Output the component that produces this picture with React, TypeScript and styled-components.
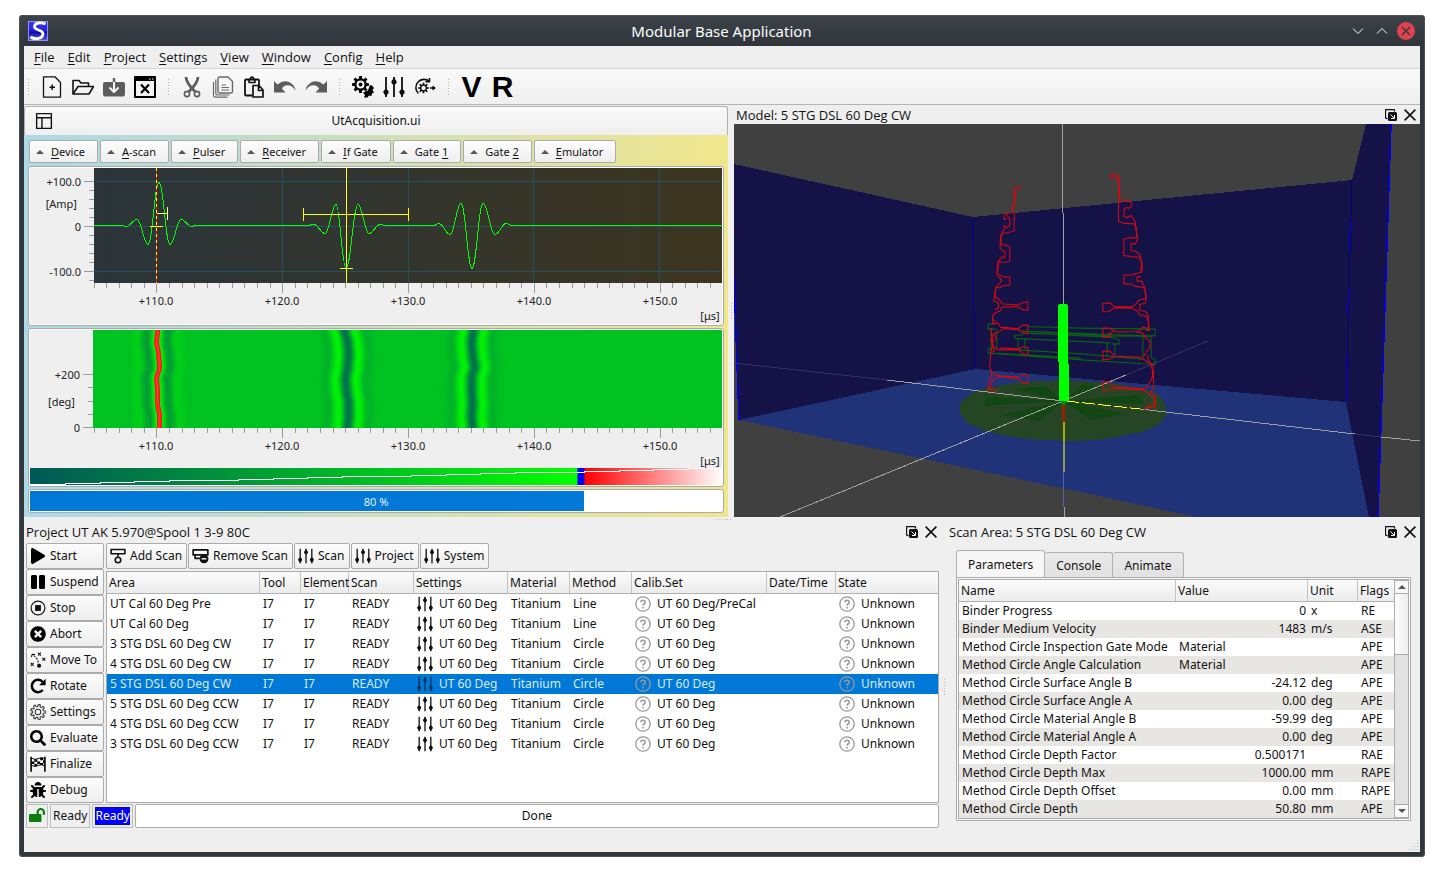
import React from "react";
import styled, { createGlobalStyle, css } from "styled-components";
import { FaBug, FaLockOpen, FaPause, FaPlay, FaSearch, FaTimesCircle } from "react-icons/fa";

const Global = createGlobalStyle`
  *, *::before, *::after { box-sizing: border-box; }
  body { margin: 0; background: #fff; color: #111; font: 12px/18px "Noto Sans", "Open Sans", sans-serif; }
  button, input, table { font: inherit; color: inherit; }
  svg { display: block; flex: none; }
  u { text-underline-offset: 2px; }
`;

/* ---------- window frame ---------- */

const Page = styled.div`
  display: flex;
  min-height: 100vh;
  padding: 15px 19px 23px;
`;

const AppWindow = styled.div`
  flex: 1;
  min-width: 0;
  display: flex;
  flex-direction: column;
  padding: 0 5px 5px;
  background: #31373c;
  border-radius: 4px;
  box-shadow: inset 0 0 0 1px #4b5358;
`;

const TitleBar = styled.header`
  height: 30px;
  margin: 1px -4px 0;
  padding: 0 9px 0 8px;
  display: grid;
  grid-template-columns: 1fr auto 1fr;
  align-items: center;
  background: linear-gradient(#3c4349, #2f353a);
  border-radius: 3px 3px 0 0;
  color: #fcfcfc;
`;

const WindowTitle = styled.h1`
  margin: 0;
  font: 400 15px/20px "Noto Sans", sans-serif;
`;

const WindowButtons = styled.div`
  display: flex;
  justify-content: flex-end;
  gap: 6px;
`;

const PlainButton = styled.button`
  display: flex;
  align-items: center;
  justify-content: center;
  padding: 0;
  border: 0;
  background: none;
`;

const Client = styled.main`
  flex: 1;
  display: flex;
  flex-direction: column;
  background: #efefef;
`;

const MenuBar = styled.nav`
  display: flex;
  height: 23px;
  padding: 0 3px;
  border-bottom: 1px solid #d4d4d4;
  font: 13px/18px "Open Sans", sans-serif;
`;

const MenuItem = styled.button`
  padding: 0 7px 0 6px;
  border: 0;
  background: none;
  &:first-child { padding-left: 7px; }
`;

const ToolBar = styled.div`
  display: flex;
  align-items: center;
  height: 36px;
  border-bottom: 1px solid #b4b4b4;
  background: linear-gradient(#fafafa, #efefef);
`;

const ToolHandle = styled.span`
  width: 4px;
  height: 17px;
  margin: 0 5px 0 7px;
  background: radial-gradient(circle, #b0b0b0 32%, transparent 36%) 0 0 / 3px 3px;
  &:first-child { margin-left: 3px; }
`;

const ToolButton = styled(PlainButton)`
  width: 31px;
  height: 30px;
`;

const Letter = styled.span`
  font: bold 30px/30px "Liberation Sans", Arial, sans-serif;
  color: #000;
`;

/* ---------- docks ---------- */

const Docks = styled.div`
  display: flex;
`;

const LeftDock = styled.section`
  flex: 704 1 0;
  min-width: 0;
`;

const VSplitter = styled.div`
  flex: none;
  width: 6px;
  display: flex;
  align-items: center;
  justify-content: center;
  &::after {
    content: "";
    width: 1px;
    height: 16px;
    background: repeating-linear-gradient(#b4b4b4 0 1px, transparent 1px 3px);
  }
`;

const HSplitter = styled.div`
  height: 5px;
  padding: 2px 0 0 691px;
  &::after {
    content: "";
    display: block;
    width: 17px;
    height: 1px;
    background: repeating-linear-gradient(90deg, #b4b4b4 0 1px, transparent 1px 3px);
  }
`;

const RightDock = styled.section`
  flex: 686 1 0;
  min-width: 0;
`;

const DockTitle = styled.header`
  display: flex;
  align-items: center;
  justify-content: space-between;
  height: 19px;
  padding: 0 4px 0 2px;
`;

const DockName = styled.h2`
  margin: 0;
  font: 400 13px/18px "Open Sans", sans-serif;
`;

const DockButtons = styled.div`
  display: flex;
  gap: 7px;
`;

const UiHeader = styled.div`
  display: grid;
  grid-template-columns: 1fr auto 1fr;
  align-items: center;
  height: 29px;
  margin-top: 1px;
  padding: 0 10px;
  border: 1px solid #b0b0b0;
  border-bottom: 0;
  border-radius: 3px 3px 0 0;
  background: linear-gradient(#fafafa, #efefef);
`;

const UiBody = styled.div`
  display: flex;
  flex-direction: column;
  gap: 2px;
  padding: 5px 4px 4px;
  background: linear-gradient(90deg, #add8e6, #f0e68c);
`;

const GateBar = styled.div`
  display: flex;
  gap: 2px;
  margin-bottom: 1px;
  padding-left: 1px;
  font: 11px/18px "Noto Sans", sans-serif;
`;

const GateButton = styled.button`
  display: flex;
  align-items: center;
  gap: 7px;
  height: 23px;
  padding: 0 12px 0 6px;
  border: 1px solid #ababab;
  border-radius: 2px;
  background: linear-gradient(#fdfdfd, #eeeeee);
`;

const Frame = styled.div`
  padding: 1px;
  border: 1px solid #ababab;
  border-radius: 3px;
  background: #fff;
`;

const Chart = styled.svg`
  width: 100%;
  height: auto;
  background: #efefef;
  font-family: "Noto Sans", sans-serif;
`;

const Scene = styled.svg`
  width: 100%;
  height: auto;
  background: #404040;
`;

const Progress = styled.div`
  position: relative;
  height: 20px;
  background: #fff;
`;

const ProgressFill = styled.div<{ $percent: number }>`
  width: ${(p) => p.$percent}%;
  height: 100%;
  background: #0078d7;
`;

const ProgressLabel = styled.span`
  position: absolute;
  inset: 0;
  text-align: center;
  font: 11px/21px "Noto Sans", sans-serif;
  color: #e4f1fb;
`;

/* ---------- project dock ---------- */

const LowerDocks = styled.div`
  flex: 1;
  display: flex;
`;

const ProjectDock = styled.section`
  flex: 917 1 0;
  min-width: 0;
`;

const ScanDock = styled.section`
  flex: 473 1 0;
  min-width: 0;
  display: flex;
  flex-direction: column;
  padding-bottom: 1px;
`;

const ProjectGrid = styled.div`
  display: grid;
  grid-template-columns: 78px minmax(0, 1fr);
  column-gap: 2px;
  padding: 2px 2px 0 2px;
`;

const SideButtons = styled.div`
  display: flex;
  flex-direction: column;
`;

const raised = css`
  border: 1px solid #ababab;
  border-radius: 2px;
  background: linear-gradient(#fcfcfc, #eeeeee);
`;

const SideButton = styled.button`
  ${raised}
  display: flex;
  align-items: center;
  gap: 4px;
  height: 26px;
  padding: 0 3px;
  white-space: nowrap;
`;

const ScanBar = styled.div`
  display: flex;
  gap: 1px;
  margin-bottom: 2px;
`;

const ScanButton = styled.button`
  ${raised}
  display: flex;
  align-items: center;
  gap: 4px;
  height: 26px;
  padding: 0 4px 0 3px;
  white-space: nowrap;
`;

const ProjectMain = styled.div`
  display: flex;
  flex-direction: column;
`;

const TableBox = styled.div`
  flex: 1;
  border: 1px solid #ababab;
  background: #fff;
`;

const headCell = css`
  padding: 0 0 0 2px;
  border-right: 1px solid #c4c4c4;
  border-bottom: 1px solid #b0b0b0;
  background: linear-gradient(#fbfbfb, #ececec);
  text-align: left;
  font-weight: 400;
  white-space: nowrap;
  &:last-child { border-right: 0; }
`;

const ScanTable = styled.table`
  width: 100%;
  table-layout: fixed;
  border-collapse: separate;
  border-spacing: 0;
  th { ${headCell} height: 22px; }
  td { height: 20px; padding: 0 3px; white-space: nowrap; }
`;

const ScanRow = styled.tr<{ $selected: boolean }>`
  ${(p) => p.$selected && css`background: #0078d7; color: #d8ecfb;`}
`;

const IconCell = styled.span`
  display: flex;
  align-items: center;
  gap: 6px;
`;

const StatusRow = styled.div`
  display: flex;
  gap: 2px;
  height: 24px;
  margin: 1px 2px 0;
`;

const StatusBox = styled.div`
  border: 1px solid #bcbcbc;
  padding: 2px;
`;

const ReadyMark = styled.span`
  display: block;
  background: #00f;
  color: #fff;
`;

const Message = styled.output`
  flex: 1;
  border: 1px solid #ababab;
  border-radius: 2px;
  background: #fff;
  text-align: center;
  line-height: 22px;
`;

/* ---------- scan area dock ---------- */

const TabList = styled.div`
  display: flex;
  align-items: flex-end;
  margin: 9px 9px 0;
`;

const Tab = styled.button<{ $active?: boolean }>`
  height: ${(p) => (p.$active ? 28 : 25)}px;
  padding: ${(p) => (p.$active ? "0 11px" : "2px 11px 0")};
  margin-bottom: ${(p) => (p.$active ? -1 : 0)}px;
  border: 1px solid #b0b0b0;
  border-bottom: 0;
  border-left-width: ${(p) => (p.$active ? 1 : 0)}px;
  border-radius: 3px 3px 0 0;
  background: ${(p) => (p.$active ? "#f7f7f7" : "linear-gradient(#e9e9e9, #e2e2e2)")};
`;

const TabPane = styled.div`
  margin: 0 9px;
  padding: 1px;
  border: 1px solid #ababab;
  background: #fafafa;
`;

const ParamBox = styled.div`
  display: flex;
  border: 1px solid #ababab;
  background: #fff;
`;

const ParamTable = styled.table`
  flex: 1;
  min-width: 0;
  width: 100%;
  table-layout: fixed;
  border-collapse: separate;
  border-spacing: 0;
  th { ${headCell} height: 22px; }
  td { height: 18px; padding: 0 3px; line-height: 18px; white-space: nowrap; }
  tbody tr:nth-child(even) { background: #e8e6e3; }
`;

const ValueCell = styled.td<{ $text: boolean }>`
  text-align: ${(p) => (p.$text ? "left" : "right")};
  && { padding-right: 2px; }
`;

const ScrollBar = styled.div`
  flex: none;
  width: 14px;
  display: flex;
  flex-direction: column;
  background: #e2e2e2;
  border-left: 1px solid #ababab;
`;

const ScrollArrow = styled(PlainButton)`
  height: 14px;
  background: #f8f8f8;
  border: 1px solid #ababab;
  border-width: 1px 0;
`;

const ScrollThumb = styled.div`
  height: 61px;
  margin-bottom: auto;
  background: linear-gradient(90deg, #fdfdfd, #eeeeee);
  border-bottom: 1px solid #ababab;
`;

const Grip = styled.div`
  width: 12px;
  height: 12px;
  margin: auto 1px 0 auto;
  clip-path: polygon(100% 0, 100% 100%, 0 100%);
  background: radial-gradient(circle, #a8a8a8 34%, transparent 38%) 0 0 / 3px 3px;
`;

/* ---------- icons ---------- */

type IconProps = { size?: number; color?: string };

const Icon = ({ size = 22, color = "#111", children }: IconProps & { children: React.ReactNode }) => (
  <svg width={size} height={size} viewBox="0 0 22 22" fill="none" stroke={color} strokeWidth="1.6" strokeLinejoin="round" aria-hidden="true">
    {children}
  </svg>
);

/* Outline of a cog wheel with the given number of teeth */
function cog(cx: number, cy: number, inner: number, outer: number, teeth: number) {
  const step = (Math.PI * 2) / teeth;
  const points: string[] = [];
  for (let i = 0; i < teeth; i++) {
    [[-0.3, inner], [-0.2, outer], [0.2, outer], [0.3, inner]].forEach(([f, r]) => {
      const a = (i + f) * step;
      points.push(`${(cx + Math.cos(a) * r).toFixed(2)} ${(cy + Math.sin(a) * r).toFixed(2)}`);
    });
  }
  return `M${points.join("L")}Z`;
}

const LogoIcon = () => (
  <svg width="20" height="20" viewBox="0 0 20 20" aria-hidden="true">
    <defs>
      <linearGradient id="logo" x1="0" y1="0" x2="0" y2="1">
        <stop offset="0" stopColor="#3b3bf0" />
        <stop offset=".5" stopColor="#2020d8" />
        <stop offset=".55" stopColor="#0808a0" />
        <stop offset="1" stopColor="#5a5aff" />
      </linearGradient>
    </defs>
    <rect width="20" height="20" fill="url(#logo)" />
    <rect x=".5" y=".5" width="19" height="19" fill="none" stroke="#8f8ff8" />
    <path d="M17.500 3C13 1 7 1.500 6.500 5.500C6 9.500 15.500 8.500 15 13C14.500 18 7 19 2.500 16" fill="none" stroke="#fff" strokeWidth="2.800" />
  </svg>
);

const NewIcon = () => (
  <Icon>
    <path d="M2.500 .8H14L19.500 6.500V21.200H2.500Z" strokeWidth="1.300" />
    <path d="M11.200 8.500V14M8.500 11.200H14" strokeWidth="1.500" />
  </Icon>
);
const OpenIcon = () => (
  <Icon>
    <path d="M1 18V4.500H7L9 7H16.500V10" />
    <path d="M1 18L6 10.500H21.500L17 18Z" />
  </Icon>
);
const SaveIcon = () => (
  <Icon color="#5c5c5c">
    <path d="M2 6H20Q22 6 22 8V18Q22 20.500 20 20.500H2Q0 20.500 0 18V8Q0 6 2 6Z" fill="#5c5c5c" stroke="none" />
    <path d="M11 2V8" strokeWidth="2.400" />
    <path d="M6.500 11.500L11 16L15.500 11.500" stroke="#f5f5f5" strokeWidth="2" />
    <path d="M11 6V15" stroke="#f5f5f5" strokeWidth="2" />
  </Icon>
);
const CloseIcon = () => (
  <Icon color="#000">
    <path d="M1 1H21V21H1Z" strokeWidth="2" />
    <path d="M1 3H21" strokeWidth="4" />
    <path d="M15 3H16.500M18 3H19.500" stroke="#fff" strokeWidth="1.200" />
    <path d="M7 8.500L15 17M15 8.500L7 17" strokeWidth="2.200" />
  </Icon>
);
const CutIcon = () => (
  <Icon color="#5c5c5c">
    <path d="M5 1Q5 7 14.500 16M17 1Q17 7 7.500 16" strokeWidth="2.800" />
    <circle cx="6" cy="18" r="2.600" />
    <circle cx="16" cy="18" r="2.600" />
  </Icon>
);
const CopyIcon = () => (
  <Icon color="#6a6a6a">
    <path d="M7.500 1H16L20.500 5.500V15.500Q20.500 17 19 17H7.500Q6 17 6 15.500V2.500Q6 1 7.500 1Z" strokeWidth="1.400" />
    <path d="M3.800 3.500V17Q3.800 19 5.800 19H17.500M1.500 6V19Q1.500 21.200 3.500 21.200H15.500" strokeWidth="1.200" />
    <path d="M9.500 9H14M9.500 11.500H17M9.500 14H17" strokeWidth="1.200" />
  </Icon>
);
const PasteIcon = () => (
  <Icon>
    <path d="M9 19.500H3Q2 19.500 2 18.500V4.500Q2 3.500 3 3.500H15Q16 3.500 16 4.500V9" strokeWidth="1.800" />
    <path d="M6 6.500V3.500H7.500Q7.500 1 9 1Q10.500 1 10.500 3.500H12V6.500Z" />
    <path d="M10 9.500H16L20 14V21H10ZM15.500 9.500V14.500H20" strokeWidth="1.700" />
  </Icon>
);
const UndoIcon = ({ flip = false }: { flip?: boolean }) => (
  <Icon color="#5c5c5c">
    <path transform={flip ? "translate(22 0) scale(-1 1)" : undefined} d="M0 5L3.500 8.500Q10 3 16 6.500Q21 9.500 21.500 14.500Q18 9 13.500 9.200Q10 9.300 7.800 12.500L11.500 16.500H0Z" fill="#5c5c5c" stroke="none" />
  </Icon>
);
const GearsIcon = () => (
  <Icon color="#000">
    <path fillRule="evenodd" d={`${cog(8.5, 8.5, 6.3, 8.6, 8)}M8.500 4.500A4 4 0 1 0 8.500 12.500A4 4 0 1 0 8.500 4.500Z`} fill="#000" stroke="none" />
    <circle cx="8.500" cy="8.500" r="1.900" fill="#000" stroke="none" />
    <path d="M12 21.500L13 19L11 16.500L16 14.500L18 9L20 9.500L22 12L20.500 14L22 16.500L20 17.500L19.500 20L17 19.500L15.500 21.500Z" fill="#000" stroke="none" />
  </Icon>
);
const SlidersIcon = ({ size = 22, color = "#111" }: IconProps) => (
  <Icon size={size} color={color}>
    <path d="M3 1V21M11 1V21M19 1V21" strokeWidth="1.800" />
    <path d="M3 12.500L5.600 16L3 21L.4 16ZM11 1.500L13.600 6L11 9.500L8.400 6ZM19 12.500L21.600 16L19 21L16.400 16Z" fill={color} stroke="none" />
    <circle cx="3" cy="16" r="2.500" fill={color} stroke="none" />
    <circle cx="11" cy="6" r="2.500" fill={color} stroke="none" />
    <circle cx="19" cy="16" r="2.500" fill={color} stroke="none" />
  </Icon>
);
const GearArrowIcon = () => (
  <Icon>
    <path d="M15.500 5.500A8 8 0 1 0 4.500 17.500M15.500 2V5.800H11.500" strokeWidth="1.600" />
    <path d={`${cog(9.500, 12, 3.600, 5.400, 8)}M9.500 9.800A2.200 2.200 0 1 0 9.500 14.200A2.200 2.200 0 1 0 9.500 9.800Z`} fillRule="evenodd" fill="#000" stroke="none" />
    <path d="M16 12H21" strokeWidth="1.500" />
    <path d="M18.500 9.500L22 12L18.500 14.500Z" fill="#000" stroke="none" />
  </Icon>
);
const LayoutIcon = () => (
  <Icon size={18}>
    <path d="M2 2H20V20H2ZM2 7H20M8.500 7V20" strokeWidth="1.700" />
  </Icon>
);
const FloatIcon = () => (
  <svg width="12" height="12" viewBox="0 0 12 12" fill="none" stroke="#111" aria-hidden="true">
    <path d="M2.500 9.500H1.500Q.5 9.500 .5 8.500V1.500Q.5 .5 1.500 .5H8.500Q9.500 .5 9.500 1.500V2.500" strokeWidth="1.300" />
    <rect x="3" y="3" width="9" height="9" rx="1.500" fill="#111" stroke="none" />
    <path d="M5.500 5.500L9 9M9.500 6V9.500H6" stroke="#fff" />
  </svg>
);
const CrossIcon = () => (
  <svg width="12" height="12" viewBox="0 0 12 12" fill="none" stroke="#111" strokeWidth="1.600" aria-hidden="true">
    <path d="M.6 .6L11.400 11.400M11.400 .6L.6 11.400" />
  </svg>
);
const StopIcon = () => (
  <Icon size={16}>
    <circle cx="11" cy="11" r="9.500" />
    <rect x="7" y="7" width="8" height="8" fill="#111" stroke="none" />
  </Icon>
);
const MoveIcon = () => (
  <Icon size={16}>
    <path d="M5 5Q11 8 12.500 19" strokeWidth="1.500" strokeDasharray="3 1.500" />
    <path d="M2 7L3 3L7 3.500" strokeWidth="1.400" />
    <circle cx="12.500" cy="19" r="2" fill="#111" />
    <path d="M11 1L15 5M15 1L11 5M17 8L21 12M21 8L17 12M1 15L5 19M5 15L1 19" strokeWidth="1.400" />
  </Icon>
);
const RotateIcon = () => (
  <Icon size={16} color="#000">
    <path d="M17.500 5.500A8.500 8.500 0 1 0 17.500 16.500" strokeWidth="3.400" />
    <path d="M21.500 1V10H12.500Z" fill="#000" stroke="none" />
  </Icon>
);
const CogIcon = () => (
  <Icon size={16} color="#333">
    <path d={cog(11, 11, 7.600, 10.300, 9)} strokeWidth="1.400" />
    <circle cx="11" cy="11" r="3.800" strokeWidth="1.400" />
  </Icon>
);
const FlagIcon = () => (
  <Icon size={16} color="#000">
    <path d="M1.500 1V21.500M20.500 1V21.500" strokeWidth="2.200" />
    <path d="M2 3Q7 6 11 3.500Q16 1 20 3.500M2 13Q7 15.500 11 13Q16 11 20 13.500" strokeWidth="1.200" />
    <path d="M6 4.500H10V8H6ZM14 2.500H18V6H14ZM10 7.500H14V11H10ZM2 7.500H6V11H2ZM18 6H20V10H18ZM6 11H10V14.500H6ZM14 9.500H18V12.500H14Z" fill="#000" stroke="none" />
  </Icon>
);
const AddScanIcon = () => (
  <Icon size={16}>
    <path d="M1.500 2H20.500V8H1.500ZM11 8V12" strokeWidth="2.200" />
    <circle cx="11" cy="16.500" r="3.800" strokeWidth="2.200" />
  </Icon>
);
const RemoveScanIcon = () => (
  <Icon size={17}>
    <path d="M1.500 2.500H20.500V9H1.500ZM4 9V13.500H10" strokeWidth="2.200" />
    <circle cx="15.500" cy="14" r="5" fill="#111" />
    <path d="M12.500 14H18.500" stroke="#fff" strokeWidth="1.800" />
  </Icon>
);
const QuestionIcon = () => (
  <svg width="16" height="16" viewBox="0 0 16 16" fill="none" stroke="#999" aria-hidden="true">
    <circle cx="8" cy="8" r="7.200" strokeWidth="1.300" />
    <path d="M5.800 6.300Q5.900 4.200 8 4.200Q10.200 4.200 10.200 6.200Q10.200 7.300 9 8Q8 8.600 8 9.800" strokeWidth="1.500" />
    <path d="M8 11V12.500" strokeWidth="1.600" />
  </svg>
);
const Triangle = ({ down = false }: { down?: boolean }) => (
  <svg width="8" height="4" viewBox="0 0 8 4" fill="#555" aria-hidden="true">
    <path d={down ? "M0 0H8L4 4Z" : "M0 4H8L4 0Z"} />
  </svg>
);

/* ---------- charts ---------- */

type Point = [number, number];

const trace: Point[] = [
  [94, 225], [122, 225], [126, 226], [137, 219], [148, 244], [159, 182], [170, 244], [181, 219], [192, 226], [195, 225],
  [307, 225], [314, 224], [325, 233], [336, 204], [346, 268], [358, 204], [369, 233], [380, 224], [386, 225],
  [434, 225], [439, 223], [450, 234], [461, 203], [472, 268], [483, 203], [495, 234], [506, 223], [512, 225], [722, 225],
];

/* Joins the turning points of the signal with eased curves */
const tracePath = trace.reduce((d, [x, y], i) => {
  if (i === 0) return `M${x} ${y}`;
  const [px, py] = trace[i - 1];
  const mid = (x - px) * 0.4;
  return `${d}C${px + mid} ${py} ${x - mid} ${y} ${x} ${y}`;
}, "");

const majorTicks = [110, 120, 130, 140, 150];
const timeToX = (t: number) => 156.400 + (t - 110) * 12.58;
const minorTicks = Array.from({ length: 50 }, (_, i) => 105.200 + i).filter((t) => timeToX(t - 0.2) < 722);

const TimeAxis = ({ y }: { y: number }) => (
  <g>
    <g stroke="#9a9a9a" shapeRendering="crispEdges">
      {minorTicks.map((t) => <path key={t} d={`M${Math.round(timeToX(t - 0.2))}.500 ${y}v5`} />)}
      {majorTicks.map((t) => <path key={t} d={`M${Math.round(timeToX(t))}.500 ${y}v10`} />)}
    </g>
    <g fill="#222" fontSize="11" textAnchor="middle">
      {majorTicks.map((t) => <text key={t} x={Math.round(timeToX(t))} y={y + 22}>+{t}.0</text>)}
      <text x="710" y={y + 37}>[μs]</text>
    </g>
  </g>
);

const AScan = () => (
  <Chart viewBox="30 168 692 156" role="img" aria-label="A-scan">
    <defs>
      <linearGradient id="ascan"><stop offset="0" stopColor="#2b353a" /><stop offset="1" stopColor="#3c3520" /></linearGradient>
    </defs>
    <rect x="94" y="168" width="628" height="115" fill="url(#ascan)" />
    <g shapeRendering="crispEdges" fill="none">
      <g stroke="#24505f">
        {[181.5, 226.5, 271.5].map((y) => <path key={y} d={`M94 ${y}H722`} />)}
        {[282.5, 408.5, 533.5, 659.5].map((x) => <path key={x} d={`M${x} 168V283`} />)}
      </g>
      <path d={tracePath} transform="translate(0 .5)" stroke="#00ff00" />
      <path d="M156.500 168V283" stroke="#ff0000" />
      <path d="M156.500 168V283" stroke="#ffff00" strokeDasharray="3 3" />
      <path d="M157 213.500H167M167.500 207V220" stroke="#ffff80" />
      <path d="M150 226.500H163M346.500 168V283M340 268.500H353M303.500 214.500H408M303.500 208V221M408.500 208V221" stroke="#ffff00" />
      <g stroke="#9a9a9a">
        <path d="M84 181.500H94M84 226.500H94M84 271.500H94" />
        {[190.5, 199.5, 208.5, 217.5, 235.5, 244.5, 253.5, 262.5, 280.5].map((y) => <path key={y} d={`M89 ${y}H94`} />)}
      </g>
    </g>
    <g fill="#222" fontSize="11" textAnchor="end">
      <text x="81" y="186">+100.0</text>
      <text x="77" y="208">[Amp]</text>
      <text x="81" y="231">0</text>
      <text x="81" y="276">-100.0</text>
    </g>
    <TimeAxis y={283} />
  </Chart>
);

/* Palette of the colour bar: dark teal to green, then red fading to white */
function palette(v: number) {
  const t = Math.max(0, Math.min(1, (v + 1) / 2));
  if (t <= 0.79) {
    const k = t / 0.79;
    return `rgb(0,${Math.round(88 + 167 * k)},${Math.round(88 * (1 - k))})`;
  }
  const k = Math.round(((t - 0.79) / 0.21) * 160);
  return `rgb(255,${k},${k})`;
}

type Echo = { x: number; levels: number[]; drift: number[] };
const echoes: Echo[] = [
  { x: 158, levels: [0, 0.14, -0.34, 0.72, -0.34, 0.14, 0], drift: [0, -1, 1, 2, -1, 0, 0, 2, 2] },
  { x: 347, levels: [0, -0.14, 0.46, -0.76, 0.46, -0.14, 0], drift: [-2, 1, 2, 1, -1, 0, 2, 2, 1] },
  { x: 473, levels: [0, -0.14, 0.46, -0.76, 0.46, -0.14, 0], drift: [1, -1, 0, 2, -1, -1, 0, -1, 0] },
];

/* Level at a distance from the middle of an echo, eased between the turning points */
function levelAt(levels: number[], d: number) {
  const p = d / 10 + 3;
  const i = Math.floor(p);
  if (i < 0 || i >= levels.length - 1) return 0;
  const f = (1 - Math.cos((p - i) * Math.PI)) / 2;
  return levels[i] + (levels[i + 1] - levels[i]) * f;
}

function driftPath(x: number, drift: number[]) {
  const h = 98 / (drift.length - 1);
  return drift.reduce((d, off, i) => {
    const y = 330 + i * h;
    if (i === 0) return `M${x + off} ${y}`;
    return `${d}C${x + drift[i - 1]} ${y - h / 2} ${x + off} ${y - h / 2} ${x + off} ${y}`;
  }, "");
}

const offsets = Array.from({ length: 66 }, (_, i) => i - 33);

const BScan = () => (
  <Chart viewBox="30 330 692 155" role="img" aria-label="B-scan">
    <defs>
      <linearGradient id="bar">
        <stop offset="0" stopColor="#005858" /><stop offset=".79" stopColor="#00ff00" />
        <stop offset=".792" stopColor="#0000ff" /><stop offset=".800" stopColor="#0000ff" />
        <stop offset=".802" stopColor="#ff0000" /><stop offset="1" stopColor="#fff" />
      </linearGradient>
      <clipPath id="bclip"><rect x="93" y="330" width="629" height="98" /></clipPath>
    </defs>
    <rect x="93" y="330" width="629" height="98" fill={palette(0)} />
    <g clipPath="url(#bclip)" fill="none" strokeWidth="1.800">
      {echoes.map((e) => offsets.map((o) => (
        <path key={`${e.x}:${o}`} d={driftPath(e.x + o, e.drift)} stroke={palette(levelAt(e.levels, o))} />
      )))}
    </g>
    <g stroke="#9a9a9a" shapeRendering="crispEdges">
      <path d="M83 374.500H93M83 427.500H93M88 387.500H93M88 401.500H93M88 414.500H93" />
    </g>
    <g fill="#222" fontSize="11" textAnchor="end">
      <text x="80" y="379">+200</text>
      <text x="75" y="406">[deg]</text>
      <text x="80" y="432">0</text>
    </g>
    <TimeAxis y={428} />
    <rect x="30" y="468" width="692" height="17" fill="url(#bar)" />
    <path d="M30 484.500H65V483.500H100V482.500H134V481.500H169V480.500H238V479.500H273V478.500H307V477.500H342V476.500H411V475.500H446V474.500H480V473.500H515V472.500H584V471.500H619V470.500H653V469.500H688V468.500H722" fill="none" stroke="#fff" shapeRendering="crispEdges" />
  </Chart>
);

const ModelScene = () => (
  <Scene viewBox="734 124 686 393" role="img" aria-label="3D model view" shapeRendering="crispEdges">
    <path d="M734 164L973 217L1352 180L1366 124H1391L1378 517H1368L1346 402L975 369L739 420L734 278Z" fill="#141247" />
    <path d="M739 420L975 369L1346 402L1369 517H1196L1090 494Z" fill="#203278" />
    <g fill="none" strokeWidth="1">
      <path d="M972.500 217V240M973.500 240V314M974.500 314V369" stroke="#00008c" />
      <path d="M1352 180L1346 402" stroke="#00007c" />
      <path d="M1350.500 222L1349 250M1348.500 290L1347.500 314M1346.500 358L1346 402" stroke="#0000e6" />
      <path d="M1391 124L1378 517M734 278L739 420" stroke="#0000dc" strokeWidth="1.500" />
    </g>
    <path d="M960 404L968 395L985 388L1020 382L1063 380L1110 383L1145 389L1160 396L1166 408V415L1160 424L1145 431L1112 438L1080 441L1037 440L1007 436L985 431L967 423L960 413Z" fill="#254525" />
    <path d="M1063 401L1046 386L1012 389ZM1063 401L987 397L983 406ZM1063 401L1000 415L1040 421ZM1063 401L1082 385L1104 386ZM1063 401L1138 395L1144 404ZM1063 401L1091 420L1127 414Z" fill="#124612" />
    <g fill="none" stroke="#a0a0a0">
      <path d="M1062.500 124V213M1063.500 213V306M887 380L1063 401M1140 409L1355 434M1381 437L1420 441M780 517L1063 401M1063 401L1126 375M1064.500 507V517" />
      <path d="M1126 375L1208 341M734 363L887 380M1355 434L1381 437" stroke="#35305f" />
      <path d="M1063.500 472V507" stroke="#5064a8" />
      <path d="M1064 422V472" stroke="#8f9a50" strokeWidth="2" />
      <path d="M1064 422V441" stroke="#a8b000" strokeWidth="2" />
      <path d="M1063.500 405V422" stroke="#962000" strokeWidth="3" />
      <path d="M1066 401L1140 409" stroke="#ffff00" strokeDasharray="13 3" />
    </g>
    <g transform="translate(730.500 100.500) scale(.33333)" fill="none" strokeWidth="3.300" shapeRendering="auto">
      <g stroke="#0a620e">
        <path d="M786 671H773V686H798M782 688V745M799 688V745M787 745H773V758L1052 778L1274 792V776L1262 772M890 678L1052 683L1274 686V706L1140 702L875 692M892 693L1140 706L1262 708M875 703L853 704V714L883 715L1140 727M875 703L885 698L1140 710L1166 718V730H1145M863 716V746M883 716V746M863 748L1052 760L1235 776M1130 729V766M1153 729V766M1237 706V772M1262 708V772M1205 687H1260M798 758L1052 773" />
      </g>
      <g stroke="#d00a14">
        <path d="M872 265L868 260H855L851 264V304L847 318V336L830 338L821 346V357L829 356M851 336V386M860 266L855 272L853 300L849 330" />
        <path d="M855 388L845 393L817 400L812 409V432L828 435L838 440V483L812 486L803 482V505L799 520L810 524L822 530L838 528V554L822 555L805 562L797 560L793 580L796 590L806 596L815 610L863 614L878 605L892 604V629H878L863 619L815 620L808 632L795 636L786 645V670L803 668L810 680L865 684L877 674H892V699L876 696L865 688L820 684L806 694L788 700L785 720L790 740L806 748L862 748L877 738L892 741V764L878 760L862 745L808 742" />
        <path d="M829 344L838 355V374L830 382L820 375M820 375L822 384L812 400L809 425V445L813 448L823 454V472L814 469L804 482L800 500V520M800 526L806 530L814 541L804 552L796 562L792 585L790 605M794 602L804 608V622L792 628M788 656L795 664M782 682V720L786 735L780 760L778 800L784 824L774 844L773 866L797 869L795 878M787 700L799 712L787 724M789 734L792 750L784 756M783 812L796 825L863 830L877 822H892V848H877L863 834L804 828L790 836L780 852L778 875" />
      </g>
      <g stroke="#d00a14" transform="translate(-30 0)">
        <path d="M1170 232V223H1193L1196 238L1197 290L1204 303L1228 302L1235 312L1229 322M1172 233H1180L1184 228L1190 232L1194 250V364L1212 368L1240 370L1248 380V410L1243 412H1225L1210 416V465L1240 469L1256 470L1265 490V515L1250 518L1235 523L1210 524V550H1230L1243 557L1270 562L1276 580V595L1257 598L1243 614L1232 619H1182L1168 607L1147 608V634L1165 633L1182 622L1233 623L1248 630L1259 643L1278 648L1284 665V684L1266 680L1255 693L1190 694L1165 683H1147V709H1168L1165 700L1180 694M1147 752H1168L1184 767L1256 770L1272 778L1290 790L1296 810V830L1278 862L1265 865L1180 860L1165 844H1147V871L1166 868L1180 864L1270 868L1286 880L1303 895L1306 920L1275 922L1271 928" />
        <path d="M1228 322L1212 322L1210 346L1220 352L1232 345L1244 363L1246 388L1252 416L1245 430M1246 430L1232 430V450L1246 453L1258 463L1264 485L1260 512M1262 528H1250V542H1264L1273 562L1277 604L1270 610L1258 612V630L1274 632L1283 645L1286 690L1275 690M1246 694L1268 698L1275 712L1288 720V742L1276 756L1268 770M1147 752V778L1166 776L1184 768M1280 764L1284 780L1298 796L1300 862L1290 875L1304 884L1302 908L1280 918" />
      </g>
    </g>
    <path d="M1058 305L1060 304H1066L1068 305V362L1069 366V401H1059V362H1058Z" fill="#00ff00" />
    <path d="M1060 401H1067L1065 405H1062Z" fill="#0a8a0a" />
  </Scene>
);

/* ---------- data ---------- */

const menus = ["File", "Edit", "Project", "Settings", "View", "Window", "Config", "Help"];

const toolGroups: [string, React.ReactNode][][] = [
  [["New", <NewIcon />], ["Open", <OpenIcon />], ["Save", <SaveIcon />], ["Close", <CloseIcon />]],
  [["Cut", <CutIcon />], ["Copy", <CopyIcon />], ["Paste", <PasteIcon />], ["Undo", <UndoIcon />], ["Redo", <UndoIcon flip />]],
  [["Preferences", <GearsIcon />], ["Parameters", <SlidersIcon />], ["Run setup", <GearArrowIcon />]],
  [["View mode", <Letter>V</Letter>], ["Record mode", <Letter>R</Letter>]],
];

/* Label split round its underlined access key */
const gates: [string, string, string][] = [
  ["", "D", "evice"], ["", "A", "-scan"], ["", "P", "ulser"], ["", "R", "eceiver"],
  ["", "I", "f Gate"], ["Gate ", "1", ""], ["Gate ", "2", ""], ["", "E", "mulator"],
];

const actions: [string, React.ReactNode][] = [
  ["Start", <FaPlay size={16} color="#000" />],
  ["Suspend", <FaPause size={16} color="#000" />],
  ["Stop", <StopIcon />],
  ["Abort", <FaTimesCircle size={16} color="#000" />],
  ["Move To", <MoveIcon />],
  ["Rotate", <RotateIcon />],
  ["Settings", <CogIcon />],
  ["Evaluate", <FaSearch size={16} color="#000" />],
  ["Finalize", <FlagIcon />],
  ["Debug", <FaBug size={16} color="#000" />],
];

const scanColumns: [string, number | undefined][] = [
  ["Area", 153], ["Tool", 41], ["Element", 48], ["Scan", 65], ["Settings", 94],
  ["Material", 62], ["Method", 62], ["Calib.Set", 135], ["Date/Time", 69], ["State", undefined],
];

const scans: [string, string, string][] = [
  ["UT Cal 60 Deg Pre", "Line", "UT 60 Deg/PreCal"],
  ["UT Cal 60 Deg", "Line", "UT 60 Deg"],
  ["3 STG DSL 60 Deg CW", "Circle", "UT 60 Deg"],
  ["4 STG DSL 60 Deg CW", "Circle", "UT 60 Deg"],
  ["5 STG DSL 60 Deg CW", "Circle", "UT 60 Deg"],
  ["5 STG DSL 60 Deg CCW", "Circle", "UT 60 Deg"],
  ["4 STG DSL 60 Deg CCW", "Circle", "UT 60 Deg"],
  ["3 STG DSL 60 Deg CCW", "Circle", "UT 60 Deg"],
];
const selectedScan = 4;

const params: [string, string, string, string][] = [
  ["Binder Progress", "0", "x", "RE"],
  ["Binder Medium Velocity", "1483", "m/s", "ASE"],
  ["Method Circle Inspection Gate Mode", "Material", "", "APE"],
  ["Method Circle Angle Calculation", "Material", "", "APE"],
  ["Method Circle Surface Angle B", "-24.12", "deg", "APE"],
  ["Method Circle Surface Angle A", "0.00", "deg", "APE"],
  ["Method Circle Material Angle B", "-59.99", "deg", "APE"],
  ["Method Circle Material Angle A", "0.00", "deg", "APE"],
  ["Method Circle Depth Factor", "0.500171", "", "RAE"],
  ["Method Circle Depth Max", "1000.00", "mm", "RAPE"],
  ["Method Circle Depth Offset", "0.00", "mm", "RAPE"],
  ["Method Circle Depth", "50.80", "mm", "APE"],
];

/* ---------- parts ---------- */

const Dock = ({ name }: { name: string }) => (
  <DockTitle>
    <DockName>{name}</DockName>
    <DockButtons>
      <PlainButton aria-label="Float"><FloatIcon /></PlainButton>
      <PlainButton aria-label="Close"><CrossIcon /></PlainButton>
    </DockButtons>
  </DockTitle>
);

const Scans = () => (
  <TableBox>
    <ScanTable>
      <colgroup>{scanColumns.map(([name, width]) => <col key={name} width={width} />)}</colgroup>
      <thead><tr>{scanColumns.map(([name]) => <th key={name} scope="col">{name}</th>)}</tr></thead>
      <tbody>
        {scans.map(([area, method, calibration], i) => (
          <ScanRow key={area} $selected={i === selectedScan}>
            <td>{area}</td>
            <td>I7</td>
            <td>I7</td>
            <td>READY</td>
            <td><IconCell><SlidersIcon size={16} color={i === selectedScan ? "#08335a" : "#111"} />UT 60 Deg</IconCell></td>
            <td>Titanium</td>
            <td>{method}</td>
            <td><IconCell><QuestionIcon />{calibration}</IconCell></td>
            <td></td>
            <td><IconCell><QuestionIcon />Unknown</IconCell></td>
          </ScanRow>
        ))}
      </tbody>
    </ScanTable>
  </TableBox>
);

const Parameters = () => (
  <TabPane role="tabpanel">
    <ParamBox>
      <ParamTable>
        <colgroup><col width="217" /><col /><col width="50" /><col width="36" /></colgroup>
        <thead><tr><th scope="col">Name</th><th scope="col">Value</th><th scope="col">Unit</th><th scope="col">Flags</th></tr></thead>
        <tbody>
          {params.map(([name, value, unit, flags]) => (
            <tr key={name}>
              <td>{name}</td>
              <ValueCell $text={value === "Material"}>{value}</ValueCell>
              <td>{unit}</td>
              <td>{flags}</td>
            </tr>
          ))}
        </tbody>
      </ParamTable>
      <ScrollBar>
        <ScrollArrow aria-label="Scroll up"><Triangle /></ScrollArrow>
        <ScrollThumb />
        <ScrollArrow aria-label="Scroll down"><Triangle down /></ScrollArrow>
      </ScrollBar>
    </ParamBox>
  </TabPane>
);

export default function App() {
  return (
    <Page>
      <Global />
      <AppWindow>
        <TitleBar>
          <LogoIcon />
          <WindowTitle>Modular Base Application</WindowTitle>
          <WindowButtons>
            <PlainButton aria-label="Minimize">
              <svg width="18" height="18" viewBox="0 0 18 18" fill="none" stroke="#fcfcfc"><path d="M4 6.500L9 11.500L14 6.500" /></svg>
            </PlainButton>
            <PlainButton aria-label="Maximize">
              <svg width="18" height="18" viewBox="0 0 18 18" fill="none" stroke="#fcfcfc"><path d="M4 11.500L9 6.500L14 11.500" /></svg>
            </PlainButton>
            <PlainButton aria-label="Close window">
              <svg width="18" height="18" viewBox="0 0 18 18" fill="none" stroke="#31373c"><circle cx="9" cy="9" r="9" fill="#e0434f" stroke="none" /><path d="M5 5L13 13M13 5L5 13" strokeWidth="1.300" /></svg>
            </PlainButton>
          </WindowButtons>
        </TitleBar>
        <Client>
          <MenuBar>
            {menus.map((m) => <MenuItem key={m}><u>{m[0]}</u>{m.slice(1)}</MenuItem>)}
          </MenuBar>
          <ToolBar role="toolbar">
            {toolGroups.map((group, i) => (
              <React.Fragment key={i}>
                <ToolHandle />
                {group.map(([label, icon]) => <ToolButton key={label} aria-label={label}>{icon}</ToolButton>)}
              </React.Fragment>
            ))}
          </ToolBar>

          <Docks>
            <LeftDock>
              <UiHeader><LayoutIcon /><span>UtAcquisition.ui</span></UiHeader>
              <UiBody>
                <GateBar>
                  {gates.map(([before, key, after]) => (
                    <GateButton key={before + key}><Triangle /><span>{before}<u>{key}</u>{after}</span></GateButton>
                  ))}
                </GateBar>
                <Frame><AScan /></Frame>
                <Frame><BScan /></Frame>
                <Frame>
                  <Progress role="progressbar" aria-valuenow={80}>
                    <ProgressFill $percent={80} />
                    <ProgressLabel>80 %</ProgressLabel>
                  </Progress>
                </Frame>
              </UiBody>
            </LeftDock>
            <VSplitter />
            <RightDock>
              <Dock name="Model: 5 STG DSL 60 Deg CW" />
              <ModelScene />
            </RightDock>
          </Docks>
          <HSplitter />

          <LowerDocks>
            <ProjectDock>
              <Dock name="Project UT AK 5.970@Spool 1 3-9 80C" />
              <ProjectGrid>
                <SideButtons>
                  {actions.map(([label, icon]) => <SideButton key={label}>{icon}{label}</SideButton>)}
                </SideButtons>
                <ProjectMain>
                  <ScanBar>
                    <ScanButton><AddScanIcon />Add Scan</ScanButton>
                    <ScanButton><RemoveScanIcon />Remove Scan</ScanButton>
                    <ScanButton><SlidersIcon size={16} />Scan</ScanButton>
                    <ScanButton><SlidersIcon size={16} />Project</ScanButton>
                    <ScanButton><SlidersIcon size={16} />System</ScanButton>
                  </ScanBar>
                  <Scans />
                </ProjectMain>
              </ProjectGrid>
              <StatusRow>
                <StatusBox><FaLockOpen size={16} color="#0a7d0a" /></StatusBox>
                <StatusBox>Ready</StatusBox>
                <StatusBox><ReadyMark>Ready</ReadyMark></StatusBox>
                <Message>Done</Message>
              </StatusRow>
            </ProjectDock>
            <VSplitter />
            <ScanDock>
              <Dock name="Scan Area: 5 STG DSL 60 Deg CW" />
              <TabList role="tablist">
                <Tab role="tab" $active>Parameters</Tab>
                <Tab role="tab">Console</Tab>
                <Tab role="tab">Animate</Tab>
              </TabList>
              <Parameters />
              <Grip />
            </ScanDock>
          </LowerDocks>
        </Client>
      </AppWindow>
    </Page>
  );
}
